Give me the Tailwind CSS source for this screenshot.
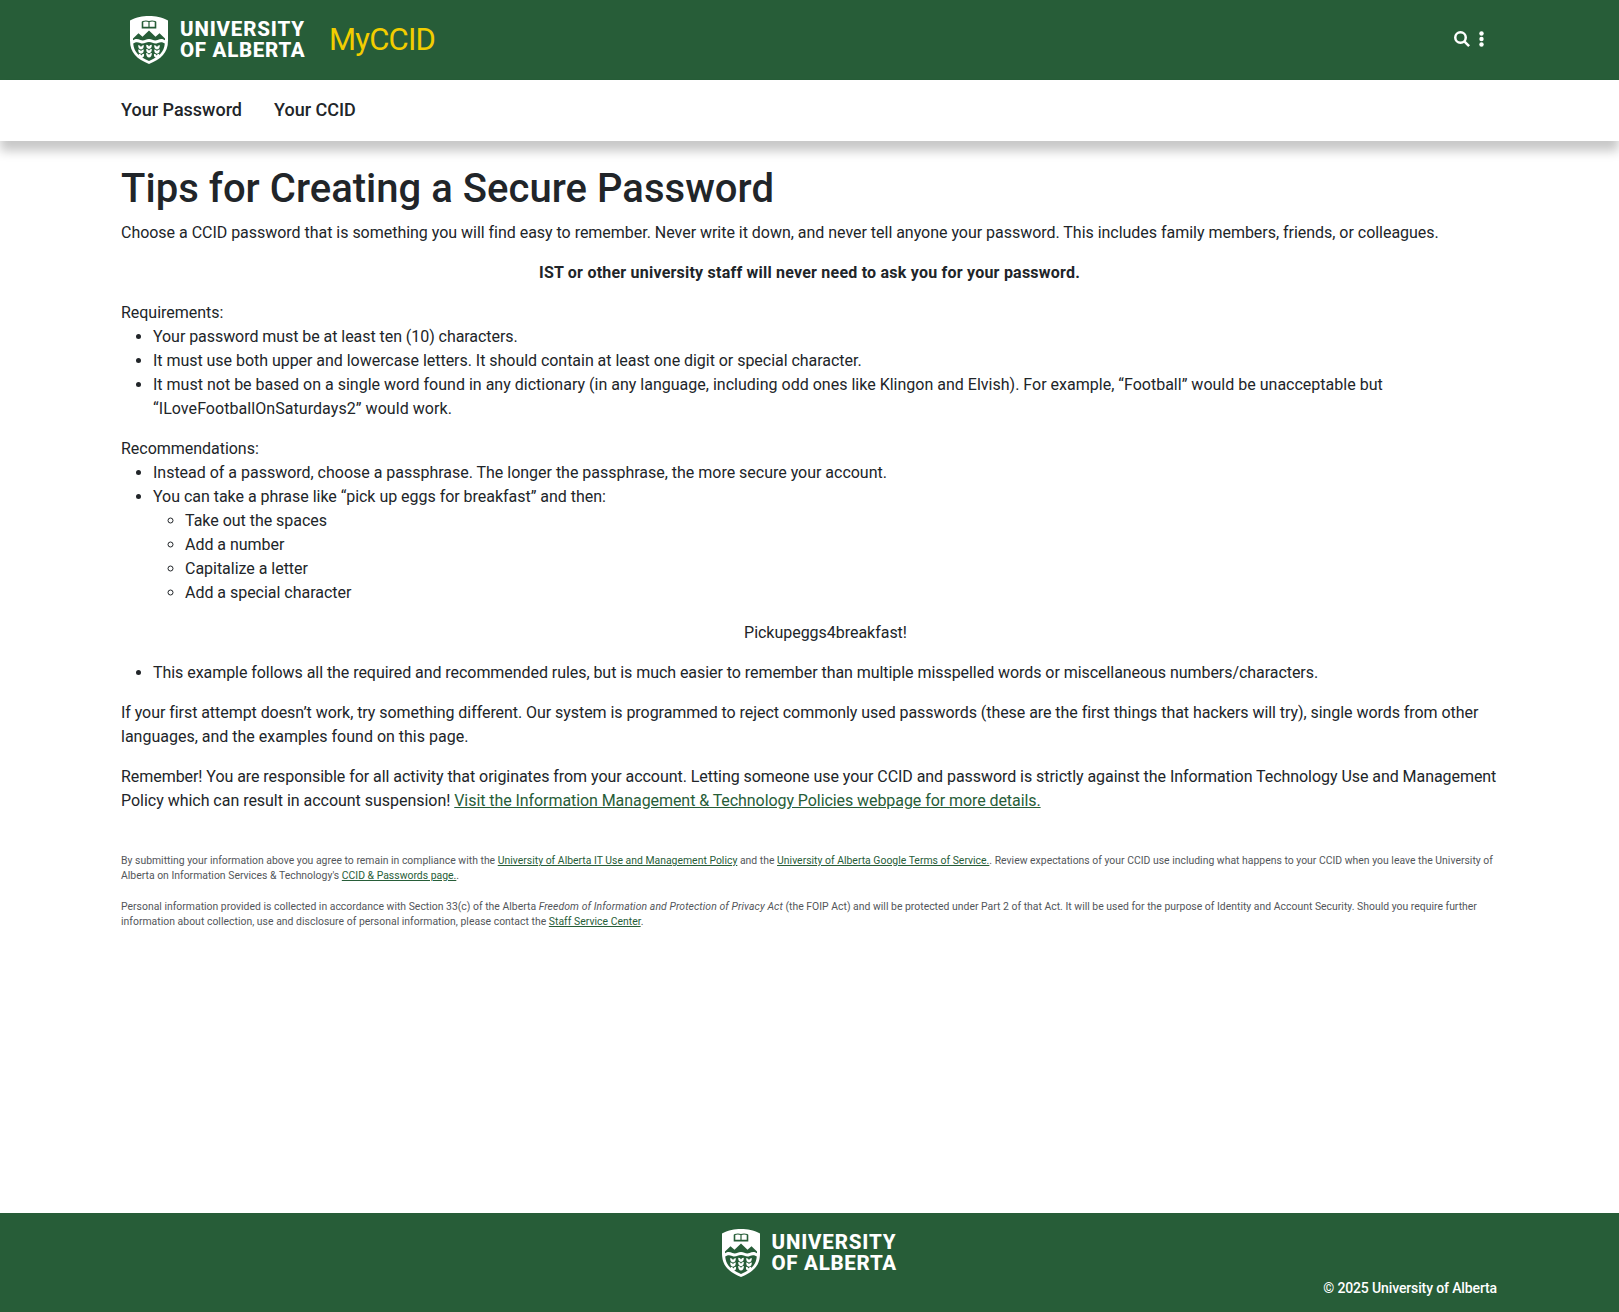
<!DOCTYPE html>
<html lang="en"><head><meta charset="utf-8"><title>MyCCID</title>
<script src="https://cdn.jsdelivr.net/npm/@tailwindcss/browser@4"></script></head>
<body class="flex min-h-screen flex-col bg-white font-[Roboto,sans-serif] text-base leading-6 text-[#212529]">
<svg class="absolute size-0">
<symbol id="leaf" viewBox="0 0 6 5"><path fill="#fff" d="M.2 0Q0 4 3 4.600 6 4 5.800 0 3.400.300 3 2 2.600.300.200 0z"/></symbol>
<symbol id="crest" viewBox="0 0 38 48">
<path fill="#fff" d="M0 4.500C7 1 12 0 19 0s12 1 19 4.500v20C38 37 31 43 19 48 7 43 0 37 0 24.500z"/>
<path fill="#275d38" d="M11.700 12.600V5.700l1-.700q3.400-1.200 6.300 0 2.900-1.200 6.300 0l1 .700v6.900z"/>
<path fill="#fff" d="M13.300 10.700V6q2.700-.800 5.100.100v4.600zM19.600 10.700V6.100Q22 5.200 24.700 6v4.700z"/>
<path fill="#275d38" d="M3 22.500l5.500-5.200 4 3.400L19 14.500l6.500 6.200 4-3.400 5.500 5.200v1.800c-3-2-5-1.300-7.500-.2-3.500 1.400-5-1-8.500-1s-5 2.400-8.500 1c-2.500-1.100-4.500-1.800-7.500.2z"/>
<path fill="#275d38" d="M3.200 27.500c3-2 4.500-1.500 7-.5 3.500 1.500 5.300-.900 8.800-.9s5.300 2.400 8.800.9c2.500-1 4-1.500 7 .5C34 36 29.500 40.500 19 45 8.500 40.500 4 36 3.200 27.500z"/>
<use href="#leaf" x="8" y="29" width="6" height="5"/><use href="#leaf" x="8" y="33.200" width="6" height="5"/><use href="#leaf" x="8.400" y="37.400" width="6" height="5"/>
<use href="#leaf" x="16" y="28.500" width="6" height="5"/><use href="#leaf" x="16" y="32.700" width="6" height="5"/><use href="#leaf" x="16" y="36.900" width="6" height="5"/>
<use href="#leaf" x="24" y="29" width="6" height="5"/><use href="#leaf" x="24" y="33.200" width="6" height="5"/><use href="#leaf" x="23.600" y="37.400" width="6" height="5"/>
</symbol></svg>
<header class="h-20 bg-[#275d38]"><div class="mx-auto flex h-full w-[1377px] items-center">
<div class="ml-[9px] flex w-[178px] items-center gap-3 whitespace-nowrap text-white"><svg class="h-12 w-[38px] shrink-0"><use href="#crest"/></svg><div class="-mt-px text-[20.500px] leading-[20.500px] font-extrabold"><div class="tracking-[0.82px]">UNIVERSITY</div><div class="tracking-[0.7px]">OF ALBERTA</div></div></div>
<span class="ml-[21px] text-[31px] tracking-[-0.8px] text-[#f2cd00]">MyCCID</span>
<div class="mr-[14px] mb-0.5 ml-auto flex items-center gap-[9px] text-white">
<svg class="h-4 w-4" viewBox="0 0 16 16" fill="none" stroke="currentColor" stroke-width="2.500"><circle cx="6.500" cy="6.500" r="5.250"/><path d="M10.300 10.300l4.800 4.800"/></svg>
<svg class="h-4 w-[5px]" viewBox="0 0 5 16" fill="currentColor"><circle cx="2.500" cy="2.500" r="2.200"/><circle cx="2.500" cy="8" r="2.200"/><circle cx="2.500" cy="13.500" r="2.200"/></svg>
</div></div></header>
<nav class="h-[61px] shadow-[0_10px_10px_rgba(0,0,0,.22)]"><div class="mx-auto flex h-[60px] w-[1377px] items-center gap-8 text-lg font-medium"><a>Your Password</a><a>Your CCID</a></div></nav>
<main class="mx-auto w-[1377px] grow pt-6 tracking-[-0.026px]">
<h1 class="mb-2 text-[40px] leading-[48px] font-medium tracking-[0.03px]">Tips for Creating a Secure Password</h1>
<p class="mb-4">Choose a CCID password that is something you will find easy to remember. Never write it down, and never tell anyone your password. This includes family members, friends, or colleagues.</p>
<p class="mb-4 text-center font-bold tracking-[0.22px]">IST or other university staff will never need to ask you for your password.</p>
<p>Requirements:</p>
<ul class="mb-4 list-disc pl-8">
<li class="tracking-[-0.055px]">Your password must be at least ten (10) characters.</li>
<li class="tracking-[-0.036px]">It must use both upper and lowercase letters. It should contain at least one digit or special character.</li>
<li class="tracking-[0.008px]">It must not be based on a single word found in any dictionary (in any language, including odd ones like Klingon and Elvish). For example, “Football” would be unacceptable but<br><span class="tracking-[0.06px]">“ILoveFootballOnSaturdays2” would work.</span></li>
</ul>
<p>Recommendations:</p>
<ul class="mb-4 list-disc pl-8">
<li class="tracking-[-0.015px]">Instead of a password, choose a passphrase. The longer the passphrase, the more secure your account.</li>
<li>You can take a phrase like “pick up eggs for breakfast” and then:
<ul class="list-[circle] pl-8"><li>Take out the spaces</li><li>Add a number</li><li>Capitalize a letter</li><li>Add a special character</li></ul></li>
<p class="my-4 text-center">Pickupeggs4breakfast!</p>
<li class="tracking-[-0.054px]">This example follows all the required and recommended rules, but is much easier to remember than multiple misspelled words or miscellaneous numbers/characters.</li>
</ul>
<p class="mb-4 tracking-[-0.056px]">If your first attempt doesn’t work, try something different. Our system is programmed to reject commonly used passwords (these are the first things that hackers will try), single words from other<br><span class="tracking-normal">languages, and the examples found on this page.</span></p>
<p class="whitespace-nowrap tracking-[-0.053px]">Remember! You are responsible for all activity that originates from your account. Letting someone use your CCID and password is strictly against the Information Technology Use and Management<br><span class="tracking-[-0.026px]">Policy which can result in account suspension!</span> <a class="tracking-[-0.07px] text-[#275d38] underline">Visit the Information Management &amp; Technology Policies webpage for more details.</a></p>
<div class="mt-10 text-[10.400px] leading-[15px] tracking-[0.015px] whitespace-nowrap text-[#53565a]">
<p class="mb-4">By submitting your information above you agree to remain in compliance with the <a class="text-[#275d38] underline">University of Alberta IT Use and Management Policy</a> and the <a class="text-[#275d38] underline">University of Alberta Google Terms of Service.</a>. Review expectations of your CCID use including what happens to your CCID when you leave the University of<br>Alberta on Information Services &amp; Technology's <a class="text-[#275d38] underline">CCID &amp; Passwords page.</a>.</p>
<p>Personal information provided is collected in accordance with Section 33(c) of the Alberta <i class="tracking-[0.095px]">Freedom of Information and Protection of Privacy Act</i> (the FOIP Act) and will be protected under Part 2 of that Act. It will be used for the purpose of Identity and Account Security. Should you require further<br><span class="tracking-[0.03px]">information about collection, use and disclosure of personal information, please contact the <a class="text-[#275d38] underline">Staff Service Center</a>.</span></p>
</div>
</main>
<footer class="h-[99px] bg-[#275d38] pt-4 text-white"><div class="mx-auto w-[1377px]">
<div class="mx-auto flex w-[176px] items-center gap-3 whitespace-nowrap"><svg class="h-12 w-[38px] shrink-0"><use href="#crest"/></svg><div class="-mt-px text-[20.500px] leading-[20.500px] font-extrabold"><div class="tracking-[0.82px]">UNIVERSITY</div><div class="tracking-[0.7px]">OF ALBERTA</div></div></div>
<p class="mr-px text-right text-sm leading-[22px] font-medium tracking-[-0.13px]">© 2025 University of Alberta</p>
</div></footer>
</body></html>
